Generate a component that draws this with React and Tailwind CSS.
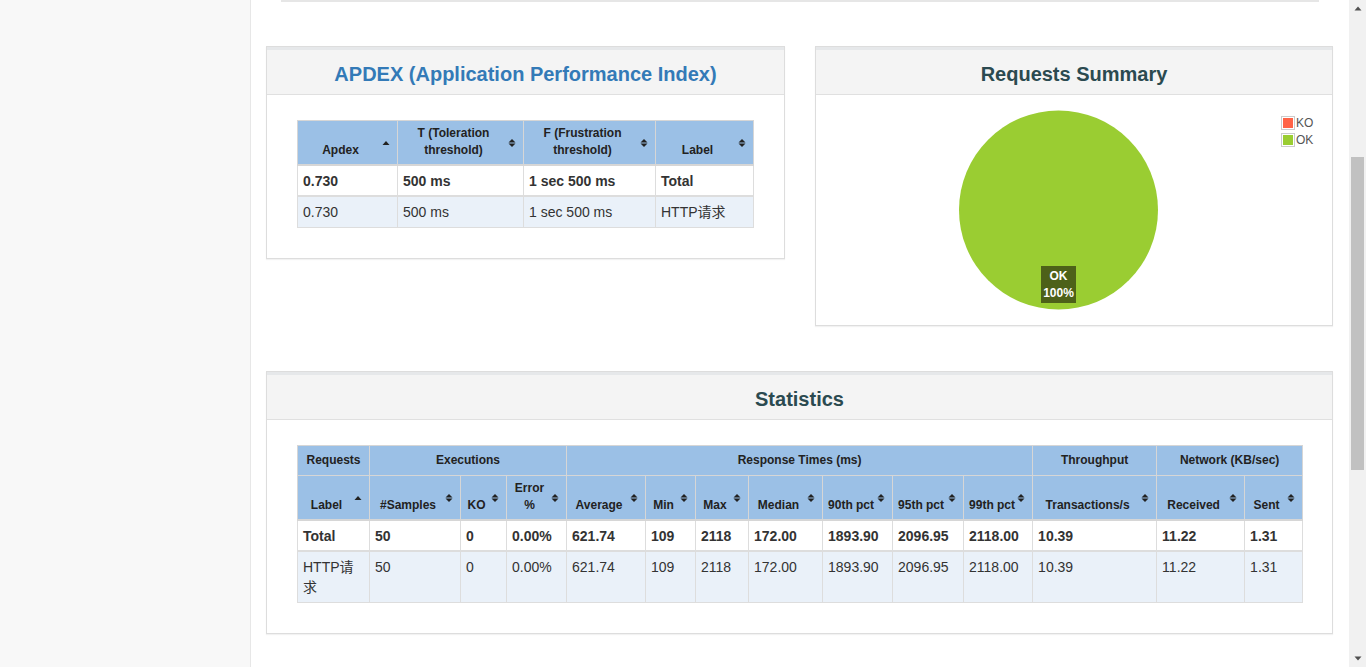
import React from "react";

const apdexRows = [
  { apdex: "0.730", t: "500 ms", f: "1 sec 500 ms", label: "Total", bold: true },
  { apdex: "0.730", t: "500 ms", f: "1 sec 500 ms", label: "HTTP请求" },
];

const statRows = [
  ["Total", "50", "0", "0.00%", "621.74", "109", "2118", "172.00", "1893.90", "2096.95", "2118.00", "10.39", "11.22", "1.31"],
  ["HTTP请求", "50", "0", "0.00%", "621.74", "109", "2118", "172.00", "1893.90", "2096.95", "2118.00", "10.39", "11.22", "1.31"],
];

const statCols = [72, 91, 46, 60, 79, 50, 53, 74, 70, 71, 69, 124, 88, 58];
const statHeads = [
  ["Label", "asc"],
  ["#Samples"],
  ["KO"],
  ["Error", "%"],
  ["Average"],
  ["Min"],
  ["Max"],
  ["Median"],
  ["90th pct"],
  ["95th pct"],
  ["99th pct"],
  ["Transactions/s"],
  ["Received"],
  ["Sent"],
];

function SortIcon({ asc }) {
  return (
    <svg className="absolute right-[7px] top-1/2 -translate-y-1/2" width="8" height="10" viewBox="0 0 8 10">
      {asc ? (
        <path d="M0.5 7L4 3L7.5 7Z" fill="#222" />
      ) : (
        <>
          <path d="M0.5 4.5L4 1L7.5 4.5Z" fill="#222" />
          <path d="M0.5 5.5L4 9L7.5 5.5Z" fill="#222" />
        </>
      )}
    </svg>
  );
}

const thSort =
  "relative border border-[#d6d6d6] border-b-2 bg-[#9bc0e6] pl-[5px] pr-[19px] pt-[4px] pb-[5px] h-[42px] align-bottom text-center text-[12px] leading-[17px] font-bold text-[#222] whitespace-nowrap";
const thGroup =
  "border border-[#d6d6d6] bg-[#9bc0e6] px-[5px] py-[6px] h-[30px] align-middle text-center text-[12px] leading-[17px] font-bold text-[#222] whitespace-nowrap";
const td = "border border-[#ddd] px-[5px] pt-[5px] align-top text-left text-[14px] leading-[20px] text-[#333]";
const tdTotal = `${td} pb-[4px] border-b-2`;
const tdPlain = `${td} pb-[5px]`;

function Panel({ title, titleClass, className, children }) {
  return (
    <div className={`border border-[#ddd] bg-white shadow-[0_1px_1px_rgba(0,0,0,0.05)] ${className}`}>
      <div className="flex h-[48px] items-center justify-center border-t-[3px] border-b border-t-[#e6e8ea] border-b-[#e0e0e0] bg-[#f4f4f4] pt-[4px]">
        <h2 className={`text-[20px] font-bold leading-[22px] ${titleClass}`}>{title}</h2>
      </div>
      {children}
    </div>
  );
}

function Scrollbar() {
  return (
    <div className="flex h-full w-[17px] flex-col bg-[#f1f1f1]">
      <div className="flex h-[17px] items-center justify-center">
        <svg width="8" height="5" viewBox="0 0 8 5">
          <path d="M0.5 4.5L4 0.5L7.5 4.5Z" fill="#505050" />
        </svg>
      </div>
      <div className="flex-1 px-[2px] pt-[140px]">
        <div className="h-[313px] w-[13px] bg-[#c1c1c1]" />
      </div>
      <div className="flex h-[17px] items-center justify-center">
        <svg width="8" height="5" viewBox="0 0 8 5">
          <path d="M0.5 0.5L4 4.5L7.5 0.5Z" fill="#505050" />
        </svg>
      </div>
    </div>
  );
}

export default function App() {
  return (
    <div className="flex h-[667px] w-[1366px] overflow-hidden bg-white font-['Liberation_Sans','Noto_Sans_CJK_SC',sans-serif]">
      {/* sidebar */}
      <div className="h-full w-[251px] shrink-0 border-r border-[#e7e7e7] bg-[#f8f8f8]" />

      {/* main */}
      <div className="h-full w-[1098px] shrink-0 bg-white">
        <div className="mx-[30px] h-[2px] bg-[#e6e6e6]" />

        <div className="mt-[44px] flex items-start gap-[30px] px-[15px]">
          <Panel title="APDEX (Application Performance Index)" titleClass="text-[#337ab7]" className="w-[519px]">
            <div className="px-[30px] pt-[25px] pb-[30px]">
              <table className="w-[456px] table-fixed border-collapse">
                <colgroup>
                  <col className="w-[100px]" />
                  <col className="w-[126px]" />
                  <col className="w-[132px]" />
                  <col className="w-[98px]" />
                </colgroup>
                <thead>
                  <tr>
                    <th className={thSort}>
                      Apdex
                      <SortIcon asc />
                    </th>
                    <th className={thSort}>
                      T (Toleration
                      <br />
                      threshold)
                      <SortIcon />
                    </th>
                    <th className={thSort}>
                      F (Frustration
                      <br />
                      threshold)
                      <SortIcon />
                    </th>
                    <th className={thSort}>
                      Label
                      <SortIcon />
                    </th>
                  </tr>
                </thead>
                <tbody>
                  {apdexRows.map((r, i) => {
                    const c = r.bold ? tdTotal : tdPlain;
                    return (
                      <tr key={i} className={r.bold ? "bg-white font-bold" : "bg-[#eaf1f9]"}>
                        <td className={c}>{r.apdex}</td>
                        <td className={c}>{r.t}</td>
                        <td className={c}>{r.f}</td>
                        <td className={c}>{r.label}</td>
                      </tr>
                    );
                  })}
                </tbody>
              </table>
            </div>
          </Panel>

          <Panel title="Requests Summary" titleClass="text-[#2b4a50]" className="w-[518px]">
            <div className="relative h-[230px]">
              <svg className="absolute inset-0" width="516" height="230" viewBox="0 0 516 230">
                <circle cx="242.5" cy="115" r="99.5" fill="#9acd32" />
                <rect x="225" y="171" width="35" height="37" fill="#4d6119" />
                <text x="242.5" y="185" textAnchor="middle" fill="#fff" fontSize="12" fontWeight="bold" fontFamily="Liberation Sans, sans-serif">
                  OK
                </text>
                <text x="242.5" y="202" textAnchor="middle" fill="#fff" fontSize="12" fontWeight="bold" fontFamily="Liberation Sans, sans-serif">
                  100%
                </text>

                <rect x="465.5" y="21.5" width="13" height="13" fill="none" stroke="#ccc" />
                <rect x="467" y="23" width="10" height="10" fill="#ff6347" />
                <text x="480" y="32" fill="#545454" fontSize="12" fontFamily="Liberation Sans, sans-serif">
                  KO
                </text>
                <rect x="465.5" y="38.5" width="13" height="13" fill="none" stroke="#ccc" />
                <rect x="467" y="40" width="10" height="10" fill="#9acd32" />
                <text x="480" y="49" fill="#545454" fontSize="12" fontFamily="Liberation Sans, sans-serif">
                  OK
                </text>
              </svg>
            </div>
          </Panel>
        </div>

        <div className="mt-[45px] px-[15px]">
          <Panel title="Statistics" titleClass="text-[#2b4a50]" className="w-[1067px]">
            <div className="px-[30px] pt-[25px] pb-[30px]">
              <table className="w-[1005px] table-fixed border-collapse">
                <colgroup>
                  {statCols.map((w, i) => (
                    <col key={i} style={{ width: w }} />
                  ))}
                </colgroup>
                <thead>
                  <tr>
                    <th className={thGroup}>Requests</th>
                    <th className={thGroup} colSpan={3}>
                      Executions
                    </th>
                    <th className={thGroup} colSpan={7}>
                      Response Times (ms)
                    </th>
                    <th className={thGroup}>Throughput</th>
                    <th className={thGroup} colSpan={2}>
                      Network (KB/sec)
                    </th>
                  </tr>
                  <tr>
                    {statHeads.map((h, i) => (
                      <th key={i} className={thSort}>
                        {h[1] === "asc" ? (
                          <>
                            {h[0]}
                            <SortIcon asc />
                          </>
                        ) : (
                          <>
                            {h[0]}
                            {h[1] && (
                              <>
                                <br />
                                {h[1]}
                              </>
                            )}
                            <SortIcon />
                          </>
                        )}
                      </th>
                    ))}
                  </tr>
                </thead>
                <tbody>
                  {statRows.map((r, i) => (
                    <tr key={i} className={i === 0 ? "bg-white font-bold" : "bg-[#eaf1f9]"}>
                      {r.map((c, j) => (
                        <td key={j} className={i === 0 ? tdTotal : tdPlain}>
                          {c}
                        </td>
                      ))}
                    </tr>
                  ))}
                </tbody>
              </table>
            </div>
          </Panel>
        </div>
      </div>

      <Scrollbar />
    </div>
  );
}
